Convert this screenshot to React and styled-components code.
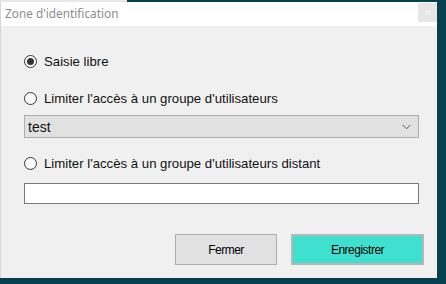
import React, { useState } from "react";
import styled, { createGlobalStyle } from "styled-components";

const GlobalStyle = createGlobalStyle`
  html, body {
    margin: 0;
    padding: 0;
    background: #063f4d;
  }
  #root {
    width: 446px;
    height: 284px;
    overflow: hidden;
  }
`;

const Screen = styled.div`
  width: 446px;
  height: 284px;
  display: flex;
  flex-direction: column;
  background: #063f4d;
`;

const Backdrop = styled.div`
  height: 2px;
  display: flex;
  .light {
    width: 127px;
    background: #e6e8e8;
  }
`;

const Dialog = styled.div`
  width: 437px;
  height: 276px;
  display: flex;
  flex-direction: column;
  background: #f0f0f0;
  border-left: 1px solid #d6d6d6;
  box-sizing: border-box;
`;

const TitleBar = styled.div`
  height: 24px;
  flex: none;
  background: #ffffff;
  display: flex;
  align-items: flex-start;
  justify-content: space-between;
`;

const Title = styled.span`
  font-family: "Noto Sans", sans-serif;
  font-size: 11.8px;
  color: #8c8c8c;
  padding: 3px 0 0 4px;
  line-height: 16px;
`;

const CloseButton = styled.div`
  width: 19px;
  height: 19px;
  margin-top: 1px;
  background: #e6e6e6;
  display: flex;
  align-items: center;
  justify-content: center;
  color: #f4f4f4;
  font-family: "Liberation Sans", sans-serif;
  font-size: 10px;
`;

const Body = styled.div`
  flex: 1;
  display: flex;
  flex-direction: column;
  padding: 28px 13px 0 23px;
  font-family: "Liberation Sans", Arial, sans-serif;
  font-size: 13.2px;
  color: #111;
`;

const RadioRow = styled.label`
  display: flex;
  align-items: center;
  gap: 7px;
  height: 14px;
  margin-top: ${p => p.$top || 0}px;
  cursor: default;
`;

const RadioCircle = styled.span`
  width: 11px;
  height: 11px;
  border: 1px solid #333;
  border-radius: 50%;
  background: #fff;
  display: flex;
  align-items: center;
  justify-content: center;
  flex: none;
  &::after {
    content: "";
    width: 7px;
    height: 7px;
    border-radius: 50%;
    background: ${p => (p.$checked ? "#333" : "transparent")};
  }
`;

const Select = styled.div`
  margin-top: 10px;
  width: 395px;
  height: 23px;
  box-sizing: border-box;
  border: 1px solid #adadad;
  background: #e1e1e1;
  display: flex;
  align-items: center;
  justify-content: space-between;
  padding: 0 7px 0 3px;
  font-size: 14px;
`;

const TextInput = styled.div`
  margin-top: 13px;
  width: 395px;
  height: 21px;
  box-sizing: border-box;
  border: 1px solid #7a7a7a;
  background: #fff;
`;

const Actions = styled.div`
  margin-top: 30px;
  display: flex;
  justify-content: flex-end;
  gap: 14px;
`;

const Button = styled.div`
  width: ${p => p.$w}px;
  height: ${p => p.$h}px;
  box-sizing: border-box;
  border: ${p => (p.$primary ? "2px solid #b7b7b7" : "1px solid #adadad")};
  background: ${p => (p.$primary ? "#40e0d0" : "#e1e1e1")};
  display: flex;
  align-items: center;
  justify-content: center;
  font-family: "Liberation Sans Narrow", "Liberation Sans", sans-serif;
  font-size: 12px;
  letter-spacing: -0.5px;
  color: #000;
`;

function Chevron() {
  return (
    <svg width="9" height="6" viewBox="0 0 9 6">
      <path d="M0.5 0.8 L4.5 4.8 L8.5 0.8" fill="none" stroke="#555" strokeWidth="1" />
    </svg>
  );
}

function App() {
  const [choice, setChoice] = useState("libre");

  return (
    <Screen>
      <GlobalStyle />
      <Backdrop>
        <div className="light" />
      </Backdrop>
      <Dialog>
        <TitleBar>
          <Title>Zone d'identification</Title>
          <CloseButton>✕</CloseButton>
        </TitleBar>
        <Body>
          <RadioRow onClick={() => setChoice("libre")}>
            <RadioCircle $checked={choice === "libre"} />
            Saisie libre
          </RadioRow>
          <RadioRow $top={23} onClick={() => setChoice("groupe")}>
            <RadioCircle $checked={choice === "groupe"} />
            Limiter l'accès à un groupe d'utilisateurs
          </RadioRow>
          <Select>
            <span>test</span>
            <Chevron />
          </Select>
          <RadioRow $top={18} onClick={() => setChoice("distant")}>
            <RadioCircle $checked={choice === "distant"} />
            Limiter l'accès à un groupe d'utilisateurs distant
          </RadioRow>
          <TextInput />
          <Actions>
            <Button $w={102} $h={31}>Fermer</Button>
            <Button $w={133} $h={31} $primary>Enregistrer</Button>
          </Actions>
        </Body>
      </Dialog>
    </Screen>
  );
}

export default App;
